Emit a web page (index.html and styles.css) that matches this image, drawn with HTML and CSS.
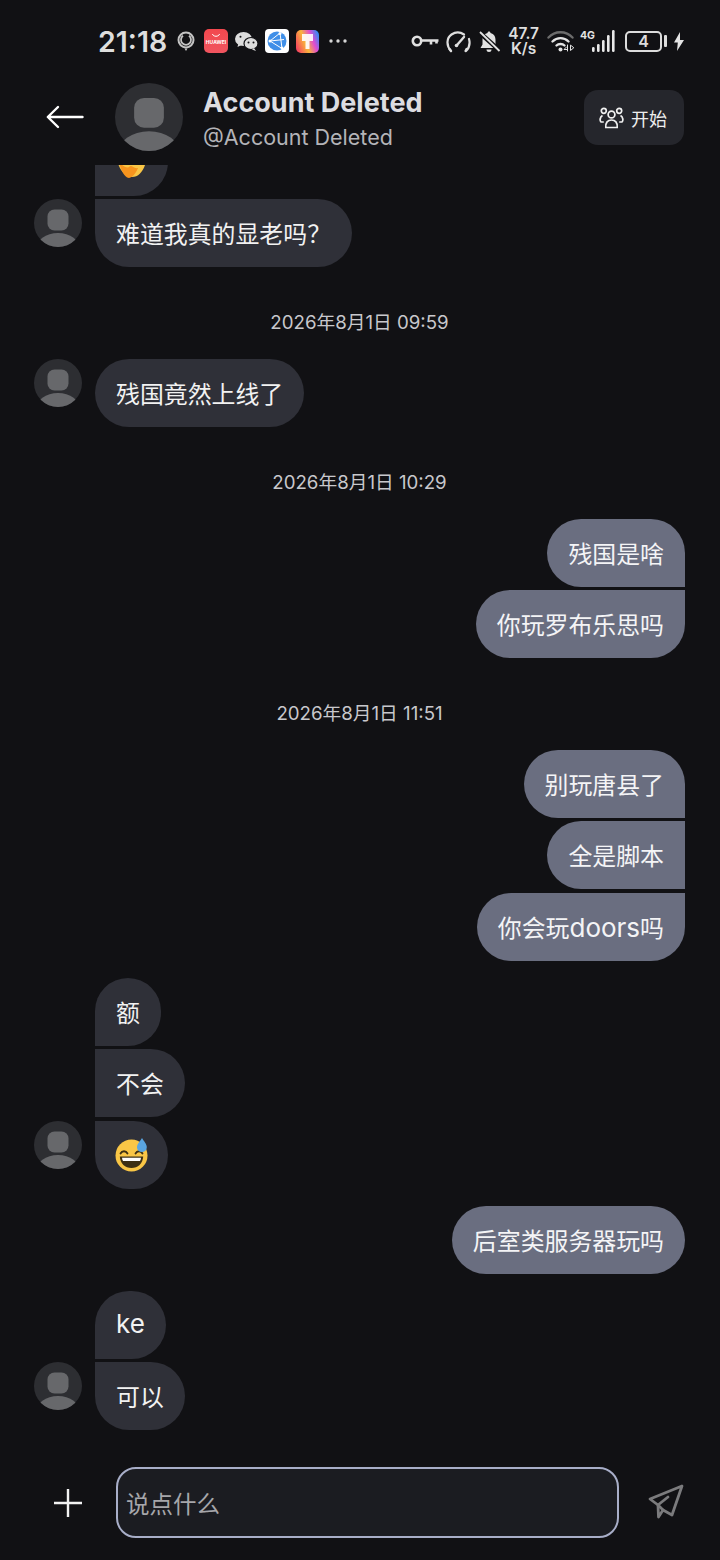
FILE: index.html
```html
<!DOCTYPE html>
<html lang="zh">
<head>
<meta charset="UTF-8">
<title>Account Deleted</title>
<link rel="stylesheet" href="styles.css">
</head>
<body>

<div class="statusbar">
  <span class="clock">21:18</span>
  <svg class="ic-ring" width="18" height="22" viewBox="0 0 18 22" fill="none" stroke="#c4c4c4">
    <circle cx="9" cy="10" r="7.5" stroke-width="2"/>
    <path d="M6 5.800a5 5 0 1 0 6 0" stroke-width="1.800"/>
    <path d="M7.500 18.500h3L9 21z" fill="#c4c4c4" stroke="none"/>
  </svg>
  <svg class="ic-app" width="24" height="24" viewBox="0 0 24 24">
    <defs><linearGradient id="hw" x1="0" y1="0" x2="0" y2="1"><stop offset="0" stop-color="#f2484e"/><stop offset="1" stop-color="#f0555f"/></linearGradient></defs>
    <rect width="24" height="24" rx="5" fill="url(#hw)"/>
    <path d="M8.500 5c.6 3 6.400 3 7 0" fill="none" stroke="#fff" stroke-width="1"/>
    <text x="12" y="15" text-anchor="middle" class="hw-label">HUAWEI</text>
  </svg>
  <svg class="ic-app" width="23" height="19" viewBox="0 0 23 19" fill="#dcdcdc">
    <ellipse cx="8.500" cy="7" rx="8.500" ry="7"/>
    <path d="M3.500 11l-1 4 4-2z"/>
    <ellipse cx="16" cy="11.500" rx="7" ry="6" stroke="#111114" stroke-width="1.200"/>
    <path d="M19 16l2 3-4-1.500z"/>
    <circle cx="13.500" cy="10.500" r="1" fill="#111114"/>
    <circle cx="18.500" cy="10.500" r="1" fill="#111114"/>
    <circle cx="5.500" cy="4.800" r="1" fill="#111114"/>
  </svg>
  <svg class="ic-app" width="24" height="24" viewBox="0 0 24 24">
    <rect width="24" height="24" rx="4" fill="#fff"/>
    <circle cx="12" cy="12" r="9.500" fill="#3f8fe8"/>
    <path d="M15 4L5 12l12 7.500M15 4l2 15.500M5 12l14-1.500" fill="none" stroke="#fff" stroke-width="1"/>
    <circle cx="15" cy="4.500" r="1.500" fill="#fff"/>
    <circle cx="5" cy="12" r="1.500" fill="#fff"/>
    <circle cx="17" cy="19" r="1.500" fill="#fff"/>
  </svg>
  <svg class="ic-app" width="23" height="23" viewBox="0 0 23 23">
    <defs><linearGradient id="paint" x1="0" y1=".7" x2="1" y2=".3"><stop offset="0" stop-color="#f5475e"/><stop offset=".4" stop-color="#f9b53a"/><stop offset=".72" stop-color="#e14bd1"/><stop offset="1" stop-color="#3b87f2"/></linearGradient></defs>
    <rect width="23" height="23" rx="5" fill="url(#paint)"/>
    <path d="M6 4h11v7h-3.500v8h-4v-8H6z" fill="#fff" opacity=".9"/>
  </svg>
  <svg class="ic-dots" width="18" height="4" viewBox="0 0 18 4" fill="#d6d6d6">
    <circle cx="2" cy="2" r="1.700"/><circle cx="9" cy="2" r="1.700"/><circle cx="16" cy="2" r="1.700"/>
  </svg>

  <div class="status-right">
    <svg class="ic-key" width="28" height="12" viewBox="0 0 28 12" fill="none" stroke="#e0e0e0" stroke-width="2.600">
      <circle cx="6" cy="6" r="4.200"/>
      <path d="M10 5.500h17.500M20 5.500v4M25.500 5.500v3"/>
    </svg>
    <svg class="ic-gauge" width="26" height="23" viewBox="0 0 26 23" fill="none" stroke="#dedede" stroke-width="2.200" stroke-linecap="round">
      <path d="M6 21C1 15.500 1.500 8 6.500 4.500c4-2.800 9-2.500 12.500 0"/>
      <path d="M24 9c1.300 4.500.5 8.500-3 12M20.500 21l1-2M6 21l-1.500-2"/>
      <path d="M12 15L19 7" stroke-width="2.400"/>
      <circle cx="11.500" cy="15.500" r="1.800" fill="#dedede" stroke="none"/>
    </svg>
    <svg class="ic-bell" width="23" height="23" viewBox="0 0 23 23">
      <path d="M11 1.500c.9 0 1.500.6 1.500 1.500 3.500.8 5 3.500 5 7v4l2 4H2.500l2-3.500V10c0-3.500 1.500-6.200 5-7 0-.9.600-1.500 1.500-1.500z" fill="#e2e2e2"/>
      <path d="M8.500 19.500h5c0 1.700-1 2.500-2.500 2.500s-2.500-.8-2.500-2.500z" fill="#e2e2e2"/>
      <path d="M1.500 2.500L21 20" stroke="#111114" stroke-width="4.500"/>
      <path d="M2 2l19.500 19" stroke="#e2e2e2" stroke-width="1.800"/>
    </svg>
    <div class="netspeed"><span>47.7</span><span>K/s</span></div>
    <svg class="ic-wifi" width="27" height="22" viewBox="0 0 27 22" fill="none" stroke-linecap="round">
      <path d="M1.500 7.500c6.500-7 17.500-7 24 0" stroke="#6c6c6c" stroke-width="2.400"/>
      <path d="M5.500 11.500c4.500-4.500 11.500-4.500 16 0" stroke="#e4e4e4" stroke-width="2.400"/>
      <path d="M9.500 15.500c2-2 6-2 8 0" stroke="#e4e4e4" stroke-width="2.400"/>
      <circle cx="13.500" cy="19.500" r="2" fill="#e4e4e4"/>
      <path d="M19.500 17l-2.500 2.500h3M20.500 15v6M23.500 15.500v5l3-2.500z" stroke="#e4e4e4" stroke-width="1"/>
    </svg>
    <div class="cell">
      <span class="cell-type">4G</span>
      <svg width="23" height="22" viewBox="0 0 23 22" fill="#e8e8e8">
        <rect x="0" y="17" width="2.600" height="5" rx="1.200"/>
        <rect x="5" y="14" width="2.600" height="8" rx="1.200"/>
        <rect x="10" y="10" width="2.600" height="12" rx="1.200"/>
        <rect x="15" y="5" width="2.600" height="17" rx="1.200"/>
        <rect x="20" y="0" width="2.600" height="22" rx="1.200"/>
      </svg>
    </div>
    <div class="battery"><span class="battery-body">4</span><span class="battery-nub"></span></div>
    <svg class="ic-bolt" width="10" height="19" viewBox="0 0 10 19" fill="#e4e4e4">
      <path d="M6 0L0 10.500h3.800L3 19l7-11H6z"/>
    </svg>
  </div>
</div>

<div class="topbar">
  <svg class="back" width="38" height="24" viewBox="0 0 38 24" fill="none" stroke="#fff" stroke-width="2.400" stroke-linecap="round" stroke-linejoin="round">
    <path d="M36.500 12H2M12 2L1.800 12 12 22"/>
  </svg>
  <svg class="avatar avatar-big" viewBox="0 0 48 48"><use href="#person"/></svg>
  <div class="who">
    <div class="who-name">Account Deleted</div>
    <div class="who-handle">@Account Deleted</div>
  </div>
  <button class="start-btn">
    <svg width="25" height="22" viewBox="0 0 25 22" fill="none" stroke="#f0f0f0" stroke-width="1.700">
      <circle cx="12.500" cy="7.500" r="3.400"/>
      <path d="M6.800 20.500c-.5-5 2-7.500 5.700-7.500s6.200 2.500 5.700 7.500z"/>
      <circle cx="4.800" cy="3.800" r="2.500"/>
      <circle cx="20.200" cy="3.800" r="2.500"/>
      <path d="M3.500 8.500C1 10 .5 13.500 2 15h2.800M21.500 8.500C24 10 24.500 13.500 23 15h-2.800"/>
    </svg>
    开始
  </button>
</div>

<div class="messages">
  <div class="group in">
    <div class="row"><span class="slot"></span><div class="bubble b-top emoji">
      <svg width="33" height="34" viewBox="0 0 33 34"><path d="M1 12c3 12 8 20 16 20 8 0 13-8 15-20z" fill="#f9c646"/><path d="M4 18c2 5 4 14 10 15 4-1 7-5 9-10-5 1-6-4-9-1-3 2-6-2-10-4z" fill="#f7941e"/></svg>
    </div></div>
    <div class="row"><svg class="avatar" viewBox="0 0 48 48"><use href="#person"/></svg><div class="bubble b-bottom">难道我真的显老吗？</div></div>
  </div>

  <div class="stamp">2026年8月1日 09:59</div>

  <div class="group in">
    <div class="row"><svg class="avatar" viewBox="0 0 48 48"><use href="#person"/></svg><div class="bubble">残国竟然上线了</div></div>
  </div>

  <div class="stamp">2026年8月1日 10:29</div>

  <div class="group out">
    <div class="bubble b-top">残国是啥</div>
    <div class="bubble b-bottom">你玩罗布乐思吗</div>
  </div>

  <div class="stamp">2026年8月1日 11:51</div>

  <div class="group group-3 out">
    <div class="bubble b-top">别玩唐县了</div>
    <div class="bubble b-mid">全是脚本</div>
    <div class="bubble b-bottom"><span>你会玩<span class="latin">doors</span>吗</span></div>
  </div>

  <div class="group group-3 in">
    <div class="row"><span class="slot"></span><div class="bubble b-top">额</div></div>
    <div class="row"><span class="slot"></span><div class="bubble b-mid">不会</div></div>
    <div class="row"><svg class="avatar" viewBox="0 0 48 48"><use href="#person"/></svg><div class="bubble b-bottom emoji">
      <svg width="33" height="34" viewBox="0 0 33 34">
        <circle cx="16.500" cy="17.500" r="16" fill="#f9c646"/>
        <path d="M5.500 15.500c1.500-3 5.500-3 7 0M20.500 15.500c1.500-3 5.500-3 7 0" fill="none" stroke="#3d3014" stroke-width="1.800" stroke-linecap="round"/>
        <path d="M4.800 18.500h23.400c-.4 7-5.300 11.500-11.700 11.500S5.200 25.500 4.800 18.500z" fill="#3d3014"/>
        <path d="M7 19.800h19c-.2 1.500-.5 2.500-1 3.200H8c-.5-.7-.8-1.700-1-3.200z" fill="#fff"/>
        <path d="M27 0c2 3.500 4.800 6 4.800 9.200a4.900 4.900 0 0 1-9.800 0C22 6 25 3.500 27 0z" fill="#5aa5e0"/>
      </svg>
    </div></div>
  </div>

  <div class="group out">
    <div class="bubble">后室类服务器玩吗</div>
  </div>

  <div class="group in">
    <div class="row"><span class="slot"></span><div class="bubble b-top"><span class="latin">ke</span></div></div>
    <div class="row"><svg class="avatar" viewBox="0 0 48 48"><use href="#person"/></svg><div class="bubble b-bottom">可以</div></div>
  </div>
</div>

<div class="composer">
  <svg class="plus" width="30" height="30" viewBox="0 0 30 30" stroke="#f2f2f2" stroke-width="2.400">
    <path d="M1 15h28M15 1v28"/>
  </svg>
  <div class="input">说点什么</div>
  <svg class="send" width="36" height="36" viewBox="0 0 36 36" fill="none" stroke="#7b7b7d" stroke-width="2.800" stroke-linejoin="round" stroke-linecap="round">
    <path d="M34 2L2 15l8 6 .5 12 4.500-7 9 5z"/>
    <path d="M10 21l10-8M10 21l5 5"/>
  </svg>
</div>

<!-- shared avatar drawing -->
<svg class="defs" width="0" height="0">
  <defs>
    <clipPath id="avatarClip"><circle cx="24" cy="24" r="24"/></clipPath>
    <g id="person" clip-path="url(#avatarClip)">
      <rect width="48" height="48" fill="#2d2e32"/>
      <rect x="13.500" y="10.500" width="21" height="21" rx="7" fill="#67686b"/>
      <ellipse cx="24" cy="50" rx="22" ry="16" fill="#67686b"/>
    </g>
  </defs>
</svg>

</body>
</html>
```

FILE: styles.css
```css
* {
  box-sizing: border-box;
}

body {
  margin: 0;
  width: 720px;
  height: 1560px;
  overflow: hidden;
  display: flex;
  flex-direction: column;
  background: #111114;
  color: #fff;
  font-family: Inter, "Noto Sans CJK SC", sans-serif;
}

/* Status bar */
.statusbar {
  height: 70px;
  flex: none;
  display: flex;
  align-items: center;
  padding: 12px 36px 0 98px;
}

.clock {
  font-size: 28.500px;
  font-weight: 600;
  color: #dedede;
  margin-right: 10px;
}

.ic-ring {
  margin-right: 9px;
}

.ic-app {
  margin-right: 7px;
}

.ic-dots {
  margin-left: 3px;
}

.hw-label {
  font-size: 5px;
  font-weight: 700;
  fill: #fff;
}

.status-right {
  margin-left: auto;
  display: flex;
  align-items: center;
  gap: 8px;
}

.ic-key {
  margin-right: -2px;
}

.ic-bell {
  margin-left: -1px;
}

.netspeed {
  display: flex;
  flex-direction: column;
  align-items: center;
  font-size: 15.500px;
  font-weight: 600;
  line-height: 15px;
  color: #dedede;
  margin-left: -1px;
}

.cell {
  display: flex;
  align-items: flex-end;
  position: relative;
  padding-left: 6px;
  margin-left: 4px;
}

.cell-type {
  position: absolute;
  left: -6px;
  top: 0;
  font-size: 10.500px;
  font-weight: 700;
  line-height: 11px;
  color: #e4e4e4;
}

.battery {
  display: flex;
  align-items: center;
  gap: 2px;
  margin-left: 2px;
}

.battery-body {
  width: 37px;
  height: 21px;
  border: 2px solid #dcdcdc;
  border-radius: 5px;
  text-align: center;
  font-size: 16px;
  font-weight: 600;
  line-height: 17px;
  color: #dcdcdc;
}

.battery-nub {
  width: 3px;
  height: 12px;
  border-radius: 1px;
  background: #dcdcdc;
}

.ic-bolt {
  margin-left: -1px;
}

/* Header */
.topbar {
  height: 95px;
  flex: none;
  display: flex;
  align-items: flex-start;
  padding: 13px 36px 0 46px;
}

.back {
  margin: 22px 31px 0 0;
}

.avatar {
  width: 48px;
  height: 48px;
  flex: none;
}

.avatar-big {
  width: 68px;
  height: 68px;
  margin-right: 20px;
}

.who {
  flex: 1;
  padding-top: 1px;
}

.who-name {
  font-size: 27px;
  font-weight: 700;
  line-height: 38px;
  color: #dcdce0;
}

.who-handle {
  font-size: 21.500px;
  line-height: 30px;
  color: #b4b4b8;
}

.start-btn {
  width: 100px;
  height: 55px;
  margin-top: 7px;
  padding: 0 4px 0 2px;
  display: flex;
  align-items: center;
  justify-content: center;
  gap: 7px;
  border: none;
  border-radius: 14px;
  background: #25262c;
  color: #eee;
  font-family: inherit;
  font-size: 18px;
}

/* Messages */
.messages {
  flex: 1;
  min-height: 0;
  overflow: hidden;
  display: flex;
  flex-direction: column;
  justify-content: flex-end;
  padding: 0 35px 18px 34px;
}

.group {
  flex: none;
  display: flex;
  flex-direction: column;
  gap: 3px;
  margin-bottom: 17px;
}

.group-3 > :last-child {
  margin-top: 1px;
}

.group:last-child {
  margin-bottom: 0;
}

.group.out {
  align-items: flex-end;
}

.row {
  display: flex;
  align-items: flex-start;
  gap: 13px;
}

.slot {
  width: 48px;
  flex: none;
}

.bubble {
  height: 68px;
  padding: 0 21px 2px;
  display: flex;
  align-items: center;
  flex: none;
  border-radius: 34px;
  font-size: 23.900px;
  white-space: nowrap;
}

.latin {
  font-size: 26px;
  line-height: 24px;
}

.in .bubble {
  background: #2f3038;
  color: #f2f2f2;
}

.out .bubble {
  background: #6a6e80;
  color: #f4f4f6;
}

.in .emoji {
  padding: 0 20px;
}

.in .b-top {
  border-bottom-left-radius: 0;
}

.in .b-mid {
  border-top-left-radius: 0;
  border-bottom-left-radius: 0;
}

.in .b-bottom {
  border-top-left-radius: 0;
}

.out .b-top {
  border-bottom-right-radius: 0;
}

.out .b-mid {
  border-top-right-radius: 0;
  border-bottom-right-radius: 0;
}

.out .b-bottom {
  border-top-right-radius: 0;
}

.stamp {
  flex: none;
  height: 28px;
  margin: 25px 0 22px;
  text-align: center;
  font-size: 18.700px;
  line-height: 28px;
  color: #c8c8cc;
}

/* Composer */
.composer {
  height: 112px;
  flex: none;
  display: flex;
  align-items: flex-start;
  padding: 19px 0 0 53px;
}

.plus {
  margin: 21px 33px 0 0;
}

.input {
  width: 503px;
  height: 71px;
  padding-left: 8px;
  display: flex;
  align-items: center;
  border: 2px solid #a8aec8;
  border-radius: 20px;
  background: #1b1c21;
  font-size: 23.500px;
  color: #a6a6aa;
}

.send {
  margin: 17px 0 0 29px;
}

.defs {
  position: absolute;
}
```
